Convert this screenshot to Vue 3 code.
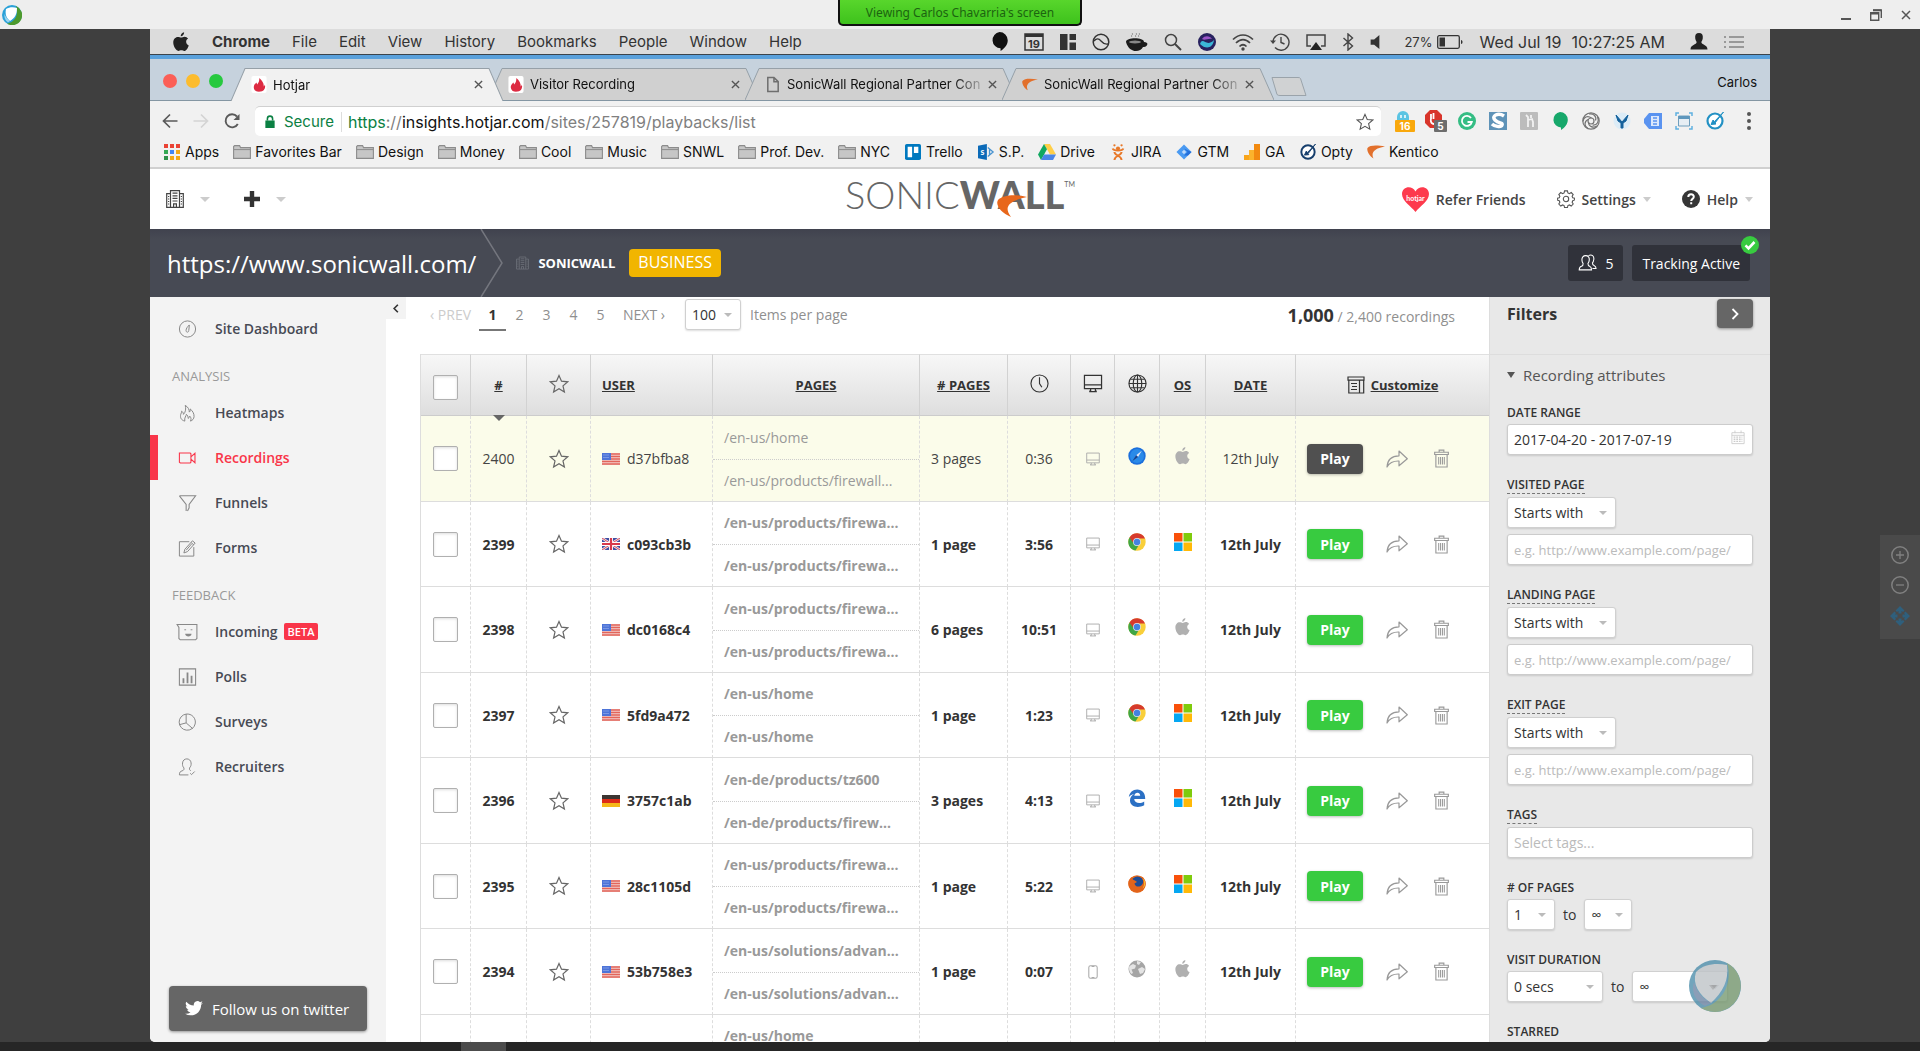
<script setup>
import { h } from 'vue'

const icons = {
  building: ['0 0 18 18', '<g fill="none" stroke="currentColor" stroke-width="1.2"><path d="M4.5 17.4V.7h9v16.7M4.5 3.6H.7v13.8h16.6V3.6h-3.8M7.6 17.4v-3.6h2.8v3.6"/><path d="M6.5 3.2h5M6.5 5.8h5M6.5 8.4h5M6.5 11h5M2 6.5h1.2M2 9h1.2M2 11.5h1.2M2 14h1.2M14.8 6.5H16M14.8 9H16M14.8 11.5H16M14.8 14H16"/></g>'],
  plus: ['0 0 16 16', '<path d="M5.8 0h4.4v5.8H16v4.4h-5.8V16H5.8v-5.8H0V5.8h5.8z" fill="currentColor"/>'],
  heart: ['0 0 27 25', '<path d="M13.5 25C9 19 0 14 0 7c0-7 9.500-9.500 13.500-2.500C17.500-2.500 27 0 27 7c0 7-9 12-13.500 18z" fill="#fd3a4d"/><text x="13.500" y="14" font-size="7" font-weight="700" font-family="Lato, sans-serif" text-anchor="middle" fill="#fff">hotjar</text>'],
  gear: ['0 0 20 20', '<path d="M8.400 1h3.200l.5 2.300 1.700.7 2-1.200 2.200 2.200-1.200 2 .7 1.700 2.100.5v1.800l-2.100.9-.7 1.700 1.200 2-2.200 2.200-2-1.200-1.700.7-.5 2.300H8.400l-.5-2.300-1.700-.7-2 1.200L2 15.600l1.200-2-.7-1.700-2.100-.7V9.200l2.100-.5.7-1.700L2 5l2.200-2.200 2 1.200 1.700-.7z" fill="none" stroke="currentColor" stroke-width="1.200"/><circle cx="10" cy="10" r="3" fill="none" stroke="currentColor" stroke-width="1.200"/>'],
  users: ['0 0 20 20', '<g fill="none" stroke="currentColor" stroke-width="1.200"><path d="M8 1.800c2.800 0 4.200 2 4 4.700-.1 2-1 3.300-1.500 4 0 1.800.2 2.500 1.800 3.100 1.500.6 2.200 1.500 2.200 4H.8c0-2.500.7-3.400 2.500-4 1.500-.6 2-1.300 1.800-3.100C4.500 9.800 3.900 8.500 3.800 6.500c-.1-2.700 1.400-4.700 4.200-4.700z"/><path d="M11 1.800c4-1.800 6.500.5 6 4.300-.2 1.700-.8 3-1.500 3.800 0 1.600.4 2.300 1.800 2.800 1.500.6 2.200 1.300 2.200 3.500h-4"/></g>'],
  star: ['0 0 20 20', '<path d="M10 1.500l2.500 5.700 6.200.6-4.700 4.100 1.400 6.100-5.400-3.200L4.600 18 6 11.900 1.300 7.800l6.200-.6z" fill="none" stroke="currentColor" stroke-width="1.200"/>'],
  clock: ['0 0 20 20', '<circle cx="10" cy="10" r="9" fill="none" stroke="currentColor" stroke-width="1.200"/><path d="M10 3.500V10l2.500 4" fill="none" stroke="currentColor" stroke-width="1.200"/>'],
  monitor: ['0 0 20 20', '<path d="M1 1.500h18v14H1zM1 11.500h18M7.500 15.500v2.500H6M12.500 15.500v2.500H14M6 18.500h8" fill="none" stroke="currentColor" stroke-width="1.300"/>'],
  phone: ['0 0 20 20', '<rect x="4" y="1" width="12" height="18" rx="2.500" fill="none" stroke="currentColor" stroke-width="1.500"/><path d="M8 1.500h4v1.500H8zM8 17h4v1.500H8z" fill="currentColor"/>'],
  globe: ['0 0 20 20', '<g fill="none" stroke="currentColor" stroke-width="1.200"><circle cx="10" cy="10" r="9"/><ellipse cx="10" cy="10" rx="4.500" ry="9"/><path d="M10 1v18M1 10h18M2.500 5.500h15M2.500 14.500h15"/></g>'],
  customize: ['0 0 18 18', '<path d="M1 1h16v3.200H1zM1.800 4.200V17h14.900V4.200M12.500 4.200V17M4 7.500h6M5 10.500h5M4 13.500h6" fill="none" stroke="currentColor" stroke-width="1.200"/>'],
  share: ['0 0 22 18', '<path d="M1 17C1.500 9 6 5.800 13 5.800V1l8.300 7.800-8.300 7V11C7 10.800 3.500 12.500 1 17z" fill="none" stroke="currentColor" stroke-width="1.200" stroke-linejoin="round"/>'],
  trash: ['0 0 16 20', '<path d="M5.500 3V1h5v2M.7 3.300h14.600v2.400H.7zM2 5.700V19h12V5.700" fill="none" stroke="currentColor" stroke-width="1.200"/><path d="M5 8.500v8M7 8.500v8M9 8.500v8M11 8.500v8" stroke="currentColor" stroke-width="1.100"/>'],
  gauge: ['0 0 20 20', '<g fill="none" stroke="currentColor" stroke-width="1.100"><circle cx="10" cy="10" r="9"/><path d="M12 5.500c-2 2-3.600 4-3.600 6.200 0 2.400 3 2.400 3 0C11.500 10 12 8 12 5.500z"/></g>'],
  flame: ['0 0 20 20', '<path d="M7 19c-4-1-5.500-4-4.500-7.500.5-1.500 1-2 1-3.500 1.500 1 2 2 2 3.500C8 9 8.500 5 7.500 1.500 11 3.500 12 6.500 12 9c1-.8 1.200-2 1-3.500 2.500 2 4.500 5 4.300 8.500-.2 2.500-1.800 4.300-4 5 1-2 .8-3.800-.8-5.500-.3 1.500-1 2-1.800 2.500.2-2-.7-3.500-2-4.500 0 2-2.500 3.500-1.700 7.500z" fill="none" stroke="currentColor" stroke-width="1.100"/>'],
  camera: ['0 0 20 20', '<path d="M1 4.500h12l.8.8v9.400l-.8.8H2l-1-.8zM13.800 8.800l4.500-4v10.500l-4.500-4" fill="none" stroke="currentColor" stroke-width="1.200"/>'],
  funnel: ['0 0 20 20', '<path d="M1 2h18l-7.200 9.500v3.800L10 19M1 2l7.500 9.500V19" fill="none" stroke="currentColor" stroke-width="1.200"/>'],
  form: ['0 0 20 20', '<path d="M12 3H1v16h16V9M6 15.500l1-4L15.500 2 18.500 4.500 10 14zM14 4l3 2.500M8.500 12.500l6-7" fill="none" stroke="currentColor" stroke-width="1.100"/>'],
  incoming: ['0 0 24 20', '<path d="M1 1.700h22v15.500l-1.500 1.500h-17L3 17.200V5z" fill="none" stroke="currentColor" stroke-width="1.200"/><path d="M9 7.500h2M16 7.500h2" stroke="currentColor"/><path d="M10 12h7c0 4-7 4-7 0z" fill="currentColor"/>'],
  poll: ['0 0 20 20', '<path d="M1 1h18v18H1z" fill="none" stroke="currentColor" stroke-width="1.200"/><path d="M5.500 11.500V17M10 5v12M14.500 8.500V17" stroke="currentColor" stroke-width="2"/>'],
  pie: ['0 0 20 20', '<path d="M8.500 1.200a9 9 0 1 0 10 11A9 9 0 0 0 8.500 1.200zM8.500 1.200V11L1 13M8.500 11l7.500 6.500" fill="none" stroke="currentColor" stroke-width="1.100"/>'],
  recruit: ['0 0 20 20', '<path d="M18 15l-3.500 3.500-1.500-1.500M11 18.800H1c0-3 1-4 3-4.500 2-.6 2.300-1.600 2-3.300C4.500 9.500 4.300 7.500 4.500 5.500c.5-6 9-6 9.500 0 .2 2-.2 4-1.700 5.500-.3 1.700 0 2.500 1.200 3" fill="none" stroke="currentColor" stroke-width="1.100"/>'],
  twitter: ['0 0 20 18', '<path d="M20 2.200c-.7.300-1.500.6-2.400.7A4 4 0 0 0 19.400.4c-.8.500-1.700.8-2.600 1A4.100 4.100 0 0 0 9.800 5C6.400 4.900 3.400 3.300 1.400.8a4 4 0 0 0 1.300 5.400c-.7 0-1.300-.2-1.900-.5 0 2 1.400 3.600 3.300 4-.6.200-1.200.2-1.800.1.500 1.600 2 2.800 3.800 2.800A8.200 8.200 0 0 1 0 14.300a11.600 11.600 0 0 0 6.300 1.800c7.500 0 11.900-6.300 11.700-11.800.8-.5 1.500-1.300 2-2.100z" fill="currentColor"/>'],
  calendar: ['0 0 16 16', '<path d="M1 2.500h14V15H1zM1 5.500h14M4.500 0v3M11.500 0v3" fill="none" stroke="currentColor"/><path d="M3 7.500h10M3 10h10M3 12.500h10" stroke="currentColor" stroke-width="1.500" stroke-dasharray="2 1"/>'],
  apple: ['0 0 18 22', '<path d="M12.500 0c.2 2.400-1.700 4.600-3.800 4.600C8.400 2.400 10.300.3 12.500 0zM9.300 6c.9 0 2-1 3.700-1 1.600 0 3.100.8 4 2.200-3.300 1.900-2.700 6.300.7 7.600-.9 2.900-2.900 6.200-4.900 6.200-1.300 0-1.900-.8-3.400-.8-1.500 0-2.200.8-3.400.8C3.300 21 .3 15.800.3 11.700.3 7.800 2.800 5.300 5.300 5.300c1.700 0 2.900.7 4 .7z" fill="currentColor"/>'],
  windows: ['0 0 18 18', '<path d="M0 0h8.500v8.500H0z" fill="#f9500a"/><path d="M9.500 0H18v8.500H9.500z" fill="#7fcb0c"/><path d="M0 9.500h8.500V18H0z" fill="#05a7f2"/><path d="M9.500 9.500H18V18H9.500z" fill="#ffb908"/>'],
  chrome: ['0 0 18 18', '<circle cx="9" cy="9" r="8.700" fill="#f9cf3a"/><path d="M9 9L1.500 4.600A8.700 8.700 0 0 0 7.500 17.600L11.500 11z" fill="#3fa646"/><path d="M1.500 4.600A8.700 8.700 0 0 1 17 5.500H9L5 9.500z" fill="#d63a2d"/><circle cx="9" cy="9" r="3.900" fill="#e4e6ee"/><circle cx="9" cy="9" r="3.200" fill="#4482e0"/>'],
  safari: ['0 0 18 18', '<circle cx="9" cy="9" r="8.700" fill="#1b6fdc"/><circle cx="9" cy="9" r="7" fill="#2a8ae8"/><path d="M13.800 3.800L10 10l-1.800-1.800z" fill="#e8e8f4"/><path d="M4.200 14.200L8.200 8.200 10 10z" fill="#1c3f86"/>'],
  edge: ['0 0 18 18', '<path d="M.8 8.200C1.500 3.500 4.800.5 9.200.5c5.200 0 8.200 3.800 8 9.500H6.200c.3 4.500 6 5.200 10 2.600v3.700C9.500 19.700 2 17.500 2 11.500c0-3 1.500-5 4-6.200C3.500 5.500 2 6.500.8 8.200zm5.500-1.400h5.900c.1-4-5.400-4-5.900 0z" fill="#2b70c4"/>'],
  firefox: ['0 0 18 18', '<circle cx="9" cy="9" r="8.700" fill="#e66a1c"/><circle cx="9.500" cy="7.500" r="6" fill="#1e4c94"/><path d="M.7 6C2 3 4 2 4 2c0 2 1 3 3 3.500L9 7 6.500 8.500C7 12 12 13 14.500 9c2-3-.5-7-2.500-8 4.500 1 6.500 6 5.200 10.500C15.500 17 9 19 4.500 16 1 13.500-.3 10 .7 6z" fill="#e2641b"/><path d="M14.500 3c2 3 2.500 7 0 10.500 3-2 4-7 0-10.500z" fill="#fbc42f"/>'],
  world: ['0 0 18 18', '<circle cx="9" cy="9" r="8.500" fill="#a5a5a5"/><path d="M1.500 6L5 4l3 1.500-1 3-3.500 1L5 13l-1.500 1C1 12 .5 8 1.500 6zM9 1l4 1-2 3-2-1zM10 9l4-2 3 2-2 4-3 1z" fill="#e4e4e4"/>'],
  us: ['0 0 18 12', '<path d="M0 0h18v12H0z" fill="#f3cfcb"/><path d="M0 1h18M0 3.500h18M0 6h18M0 8.500h18M0 11h18" stroke="#e2655b" stroke-width="1.300"/><path d="M0 0h9v7H0z" fill="#4d74d8"/><path d="M1.500 2h6M1.500 4.500h6" stroke="#a9bdf0" stroke-dasharray="1 1"/>'],
  gb: ['0 0 18 12', '<path d="M0 0h18v12H0z" fill="#3e4ea2"/><path d="M0 0l18 12M18 0L0 12" stroke="#f4e4ea" stroke-width="2.500"/><path d="M0 0l18 12M18 0L0 12" stroke="#d64d5c"/><path d="M9 0v12M0 6h18" stroke="#fff" stroke-width="4"/><path d="M9 0v12M0 6h18" stroke="#d8394c" stroke-width="2.200"/>'],
  de: ['0 0 18 12', '<path d="M0 0h18v4H0z" fill="#3c3532"/><path d="M0 4h18v4H0z" fill="#dd2b18"/><path d="M0 8h18v4H0z" fill="#f5b819"/>'],
  fire: ['0 0 16 18', '<rect width="16" height="18" rx="2" fill="#fff"/><path d="M4.500 16C1 12.500 2.500 9 5.500 7c0 1 .2 1.500.6 2C8 7 8.500 4.500 8.300 2c3.500 3 5 6 4.700 9 .8-.5 1-1 1.200-2 .8 3 0 5.500-2.500 7-1.500.8-5.200 1-7.200 0z" fill="#dd2b42"/>'],
  page: ['0 0 14 18', '<path d="M1.500 1.500h6.500l4.500 4.500v10.500h-11zM8 1.500V6h4.500" fill="none" stroke="#6e6e6e" stroke-width="1.600"/>'],
  swoosh: ['0 0 18 14', '<path d="M18 1.500C10 .2 3 0 .5 3-.5 5.500 2 11 6.500 13.500 4 8.500 6 3.500 18 1.500z" fill="#e2702c"/>'],
  folder: ['0 0 18 14', '<path d="M.6 1.600V13.400h16.800V2.600H7.500L6.600.6H1.600z" fill="#c6c6c6" stroke="#8c8c8c" stroke-width="1.100"/><path d="M1 4.600h16" stroke="#8c8c8c"/>'],
  apps: ['0 0 16 16', '<path d="M0 0h4v4H0zM6 0h4v4H6zM12 0h4v4h-4z" fill="#ea4335"/><path d="M0 6h4v4H0z" fill="#34a853"/><path d="M6 6h4v4H6z" fill="#4285f4"/><path d="M12 6h4v4h-4zM6 12h4v4H6zM12 12h4v4h-4z" fill="#f4a815"/><path d="M0 12h4v4H0z" fill="#2e8f48"/>'],
  trello: ['0 0 18 18', '<rect width="18" height="18" rx="2" fill="#0079bf"/><path d="M3 3h5v12H3zM10 3h5v7h-5z" fill="#fff"/>'],
  sharepoint: ['0 0 18 18', '<path d="M0 2l10-2v18L0 16z" fill="#0b6ab8"/><path d="M11 4l6 5-6 5M13 6v6" fill="none" stroke="#4a94d0" stroke-width="1.500"/><text x="5" y="12.500" font-size="10" font-weight="700" font-family="Lato, sans-serif" text-anchor="middle" fill="#fff">s</text>'],
  drive: ['0 0 18 16', '<path d="M6 0h6l6 10.500h-6z" fill="#ffcf48"/><path d="M6 0l3 5.200L3 16 0 10.500z" fill="#11a861"/><path d="M6 10.500h12L15 16H3z" fill="#4a86e8"/>'],
  jira: ['0 0 14 18', '<path d="M1 5c1 3 11 3 12 0M3 18c0-5 8-5 8-9M11 18c0-5-8-5-8-9" fill="none" stroke="#e8792a" stroke-width="2.200"/><circle cx="7" cy="5" r="2.300" fill="#e8792a"/><circle cx="3" cy="1.500" r="1.300" fill="#e8792a"/><circle cx="11" cy="1.500" r="1.300" fill="#e8792a"/>'],
  gtm: ['0 0 18 18', '<path d="M9 .5L17.500 9 9 17.500.5 9z" fill="#4a9af2"/><path d="M9 5l4 4-4 4 4.500 0L17.500 9z" fill="#246fdb"/><path d="M9 6.500L11.500 9 9 11.500 6.500 9z" fill="#bcd9fb"/>'],
  ga: ['0 0 16 16', '<path d="M0 11h5v5H0z" fill="#f9a51a"/><path d="M5 6h5v10H5z" fill="#fbb32c"/><path d="M10 0h6v16h-6z" fill="#f28a10"/>'],
  opty: ['0 0 18 18', '<circle cx="9" cy="9" r="7.500" fill="#fff" stroke="currentColor" stroke-width="2.200"/><path d="M17.500 0L8.500 9.500l-1.500-1.500-2 4.500 5-.5-1-1z" fill="currentColor" stroke="currentColor"/>'],
  lock: ['0 0 10 14', '<path d="M0 6h10v8H0z" fill="#0b8043"/><path d="M2.200 6V4a2.800 2.800 0 0 1 5.600 0v2" fill="none" stroke="#0b8043" stroke-width="1.700"/>'],
  back: ['0 0 16 16', '<path d="M15.500 8H1.500M8 1.500L1.500 8 8 14.500" fill="none" stroke="currentColor" stroke-width="1.700"/>'],
  forward: ['0 0 16 16', '<path d="M.5 8h14M8 1.500L14.500 8 8 14.500" fill="none" stroke="currentColor" stroke-width="1.700"/>'],
  reload: ['0 0 16 16', '<path d="M13.800 11a6.500 6.500 0 1 1-.8-7.500" fill="none" stroke="currentColor" stroke-width="1.900"/><path d="M15.500 1v6h-6z" fill="currentColor"/>'],
  close: ['0 0 10 10', '<path d="M1 1l8 8M9 1L1 9" stroke="currentColor" stroke-width="1.500"/>'],
  ghost: ['0 0 20 22', '<path d="M2 12V7a6 6 0 0 1 12 0v5z" fill="#5bc4e3"/><path d="M6 5v3M10 5v3" stroke="#fff" stroke-width="1.500"/><rect y="10" width="20" height="12" rx="1" fill="#f9a80c"/><text x="10" y="20" font-size="10" font-weight="700" font-family="Inter, sans-serif" text-anchor="middle" fill="#fff">16</text>'],
  block: ['0 0 22 22', '<path d="M5 0h7l5 5v8l-5 5H5l-5-5V5z" fill="#d8352b"/><path d="M6 9V4M8.500 9V3M6 9c-1 3 1 5 3 5" stroke="#fff" stroke-width="1.800" fill="none"/><rect x="9" y="10" width="13" height="12" rx="1" fill="#6d6d6d"/><text x="15.500" y="20" font-size="10" font-weight="700" font-family="Inter, sans-serif" text-anchor="middle" fill="#fff">5</text>'],
  grammar: ['0 0 18 18', '<circle cx="9" cy="9" r="9" fill="#35bd84"/><path d="M13 6A5 5 0 1 0 13.800 10H9.500" fill="none" stroke="#fff" stroke-width="1.800"/>'],
  stylus: ['0 0 18 18', '<rect width="18" height="18" fill="#5f93b8"/><path d="M15 4C9 0 2 4 6 8s8 2 7 5-8 1-10-1" fill="none" stroke="#fff" stroke-width="3.500"/>'],
  grayext: ['0 0 18 18', '<rect width="18" height="18" rx="1" fill="#bcbcbc"/><path d="M6 3l2 2v10M8 8l4-1 1 3v5M11 3v3" fill="none" stroke="#f2f2f2" stroke-width="1.800"/>'],
  hangouts: ['0 0 16 18', '<path d="M8 0a7.800 7.800 0 0 1 7.800 7.800C15.800 12 13 15.500 9 18v-2.500A7.800 7.800 0 0 1 8 0z" fill="currentColor"/>'],
  swirl: ['0 0 18 18', '<g fill="none" stroke="#747474" stroke-width="1.200"><circle cx="9" cy="9" r="8.200"/><circle cx="9" cy="9" r="3"/><path d="M7 2c4-1 8 2 6.500 6.500M15.500 5c2 4 0 8.500-5 8M15 14c-4 2.500-8.500.5-8.500-4M6 16.500C2 14.500 2 9.500 6 7.500M1 9.500C1.500 5 5.500 3 9.500 6"/></g>'],
  yext: ['0 0 18 18', '<circle cx="9" cy="9" r="8.500" fill="#dcecf7"/><path d="M3 3l6 7 6-7-2 6-3 2v5H8v-5L5 9z" fill="#14619c" stroke="#14619c"/>'],
  tag: ['0 0 18 16', '<path d="M5 0h13v16H5L0 10V6z" fill="#5a93f0"/><path d="M7 3h8v10H7z" fill="#dce8fc"/><path d="M9 5h4M9 8h4M9 11h4" stroke="#5a93f0" stroke-width="1.500"/>'],
  capture: ['0 0 18 18', '<path d="M1 4V1h3M14 1h3v3M17 14v3h-3M4 17H1v-3" fill="none" stroke="#5fb0e0" stroke-width="1.500"/><path d="M3.500 4h11v10h-11z" fill="#e6eef4" stroke="#6f9ebd"/><path d="M3.500 4h11v3h-11z" fill="#5f97bd"/>'],
  calday: ['0 0 20 18', '<path d="M1 1h18v16H1z" fill="none" stroke="#333" stroke-width="1.500"/><path d="M1 1h18v3H1z" fill="#333"/><text x="10" y="14.500" font-size="11" font-weight="700" font-family="Inter, sans-serif" text-anchor="middle" fill="#333">19</text>'],
  panes: ['0 0 16 16', '<path d="M0 0h7.500v16H0zM9.500 0H16v6H9.500zM9.500 8.500H16V16H9.500z" fill="#333"/>'],
  noentry: ['0 0 18 18', '<circle cx="9" cy="9" r="7.800" fill="none" stroke="#333" stroke-width="1.500"/><path d="M2 8c2.500-2.500 4.500-3 7 0s4 3.500 7 3" fill="none" stroke="#333" stroke-width="1.300"/>'],
  coffee: ['0 0 22 20', '<path d="M0 10c0-5 18-5 18 0 6 0 3 6-1 5-3 6-14 6-17-5z" fill="#1c1c1c"/><ellipse cx="9" cy="10" rx="6" ry="1.500" fill="#888"/><path d="M6 5c-2-2 2-2 0-4M10 5c-2-2 2-2 0-4M13 5c-2-2 2-2 0-4" fill="none" stroke="#888"/>'],
  search: ['0 0 18 18', '<circle cx="7" cy="7" r="5.500" fill="none" stroke="#444" stroke-width="1.500"/><path d="M11 11l6 6" stroke="#444" stroke-width="2"/>'],
  siri: ['0 0 18 18', '<circle cx="9" cy="9" r="9" fill="#28225f"/><path d="M2 11c3-8 6 4 14-4-1 8-8 10-14 4z" fill="#3bb7d8"/><path d="M4 6c3-4 8-3 10 0-4-1-7 2-10 0z" fill="#9b55c8"/>'],
  wifi: ['0 0 22 18', '<path d="M1 6.500c6-6 14-6 20 0M4 10c4.500-4.500 9.500-4.500 14 0M7.500 13.500c2.500-2.500 4.500-2.500 7 0" fill="none" stroke="#444" stroke-width="1.700"/><circle cx="11" cy="16" r="1.700" fill="#444"/>'],
  history: ['0 0 20 18', '<path d="M3 9a8 8 0 1 1 2 5.500M11 4v5.500l3.500 1.500" fill="none" stroke="#444" stroke-width="1.400"/><path d="M0 7.500h6L3 11z" fill="#444"/>'],
  airplay: ['0 0 20 16', '<path d="M5 12H1V1h18v11h-4" fill="none" stroke="#444" stroke-width="1.500"/><path d="M10 8l6 8H4z" fill="#222"/>'],
  bluetooth: ['0 0 12 18', '<path d="M1.500 5l9 8L6 17V1l4.500 4-9 8" fill="none" stroke="#444" stroke-width="1.400"/>'],
  volume: ['0 0 10 16', '<path d="M0 5h4l6-5v16l-6-5H0z" fill="#333"/>'],
  battery: ['0 0 26 14', '<rect x=".7" y=".7" width="21.600" height="12.600" rx="1.500" fill="none" stroke="#333" stroke-width="1.300"/><path d="M2.500 2.500H8v9H2.500z" fill="#333"/><path d="M24 5c2 0 2 4 0 4z" fill="#333"/>'],
  person: ['0 0 18 18', '<path d="M9 0c3 0 4.500 2 4 5.500-.3 2-1 3-1.500 4 0 3 6.500 2.500 6.500 8H0c0-5.500 6.500-5 6.500-8-.5-1-1.200-2-1.500-4C4.500 2 6 0 9 0z" fill="#222"/>'],
  list: ['0 0 20 12', '<path d="M0 1h2M5 1h15M0 6h2M5 6h15M0 11h2M5 11h15" stroke="#999" stroke-width="2"/>'],
  ball: ['0 0 20 20', '<circle cx="10" cy="10" r="10" fill="#2aa1d8"/><path d="M14 .9A10 10 0 1 1 5 18.700C13 17 17 10 14 .9z" fill="#4d9a2d"/><path d="M4 4c3-2 8-2 11-1 0 6-2 10-7 13C4 13 3 9 4 4z" fill="#fff"/><path d="M2.500 9c1 3 3 5 5.500 7l-2 1.500C3 15.500 2 12 2.500 9z" fill="#9ad4f0"/>'],
  zoomin: ['0 0 18 18', '<circle cx="9" cy="9" r="8.200" fill="none" stroke="currentColor" stroke-width="1.500"/><path d="M9 5v8M5 9h8" stroke="currentColor" stroke-width="1.300"/>'],
  zoomout: ['0 0 18 18', '<circle cx="9" cy="9" r="8.200" fill="none" stroke="currentColor" stroke-width="1.500"/><path d="M5 9h8" stroke="currentColor" stroke-width="1.300"/>'],
  move: ['0 0 20 20', '<path d="M10 0l4.500 4.500-1.500 1.500-1.500-1v2.500h-3V5L7 6 5.500 4.500zM10 20l4.500-4.500L13 14l-1.500 1v-2.500h-3V15L7 14l-1.500 1.500zM0 10l4.500-4.500L6 7 5 8.500h2.500v3H5L6 13l-1.500 1.500zM20 10l-4.500-4.500L14 7l1 1.500h-2.500v3H15L14 13l1.500 1.500z" fill="currentColor"/>'],
  arrowr: ['0 0 8 12', '<path d="M1.500 1l5 5-5 5" fill="none" stroke="currentColor" stroke-width="1.800"/>'],
  arrowl: ['0 0 8 12', '<path d="M6.500 1l-5 5 5 5" fill="none" stroke="currentColor" stroke-width="2.200"/>'],
  question: ['0 0 18 18', '<circle cx="9" cy="9" r="9" fill="#363636"/><path d="M6.300 7c0-3.500 5.500-3.500 5.500-.3C11.800 9 9.200 8.700 9.200 11M9.200 12.300v2" fill="none" stroke="#fff" stroke-width="2"/>'],
  check: ['0 0 18 18', '<circle cx="9" cy="9" r="9" fill="#38cb40"/><path d="M4.500 9.300l3 3 6-6.300" fill="none" stroke="#fff" stroke-width="2.600"/>'],
  minimize: ['0 0 10 12', '<path d="M0 10h10" stroke="currentColor" stroke-width="2"/>'],
  restore: ['0 0 12 12', '<path d="M.7 3.700h8v7.600h-8zM3 1h8.300v8" fill="none" stroke="currentColor" stroke-width="1.400"/><path d="M.7 4.500h8M3 1.300h8" stroke="currentColor" stroke-width="1.800"/>'],
}

const Icon = (props) =>
  h('svg', {
    viewBox: icons[props.name][0],
    width: props.w,
    height: props.h || props.w,
    innerHTML: icons[props.name][1],
    'aria-hidden': 'true',
    style: { color: props.color },
  })
Icon.props = ['name', 'w', 'h', 'color']

const menus = ['Chrome', 'File', 'Edit', 'View', 'History', 'Bookmarks', 'People', 'Window', 'Help']

const tabs = [
  { icon: 'fire', title: 'Hotjar' },
  { icon: 'fire', title: 'Visitor Recording' },
  { icon: 'page', title: 'SonicWall Regional Partner Con' },
  { icon: 'swoosh', title: 'SonicWall Regional Partner Con' },
]

const extensions = [
  ['ghost', 20, 22], ['block', 22, 22], ['grammar', 18, 18], ['stylus', 18, 18], ['grayext', 18, 18],
  ['hangouts', 16, 18, '#17a86b'], ['swirl', 18, 18], ['yext', 18, 18], ['tag', 18, 16], ['capture', 18, 18], ['opty', 18, 18, '#2391c4'],
]

const bookmarks = [
  ['apps', 'Apps'], ['folder', 'Favorites Bar'], ['folder', 'Design'], ['folder', 'Money'], ['folder', 'Cool'],
  ['folder', 'Music'], ['folder', 'SNWL'], ['folder', 'Prof. Dev.'], ['folder', 'NYC'], ['trello', 'Trello'],
  ['sharepoint', 'S.P.'], ['drive', 'Drive'], ['jira', 'JIRA'], ['gtm', 'GTM'], ['ga', 'GA'], ['opty', 'Opty'], ['swoosh', 'Kentico'],
]

const nav = [
  { items: [['gauge', 'Site Dashboard']] },
  { label: 'Analysis', items: [['flame', 'Heatmaps'], ['camera', 'Recordings'], ['funnel', 'Funnels'], ['form', 'Forms']] },
  { label: 'Feedback', items: [['incoming', 'Incoming'], ['poll', 'Polls'], ['pie', 'Surveys'], ['recruit', 'Recruiters']] },
]

const fw = '/en-us/products/firewa...'
const rows = [
  { n: 2400, flag: 'us', user: 'd37bfba8', pages: ['/en-us/home', '/en-us/products/firewall...'], count: '3 pages', time: '0:36', device: 'monitor', browser: 'safari', os: 'apple', seen: true },
  { n: 2399, flag: 'gb', user: 'c093cb3b', pages: [fw, fw], count: '1 page', time: '3:56', device: 'monitor', browser: 'chrome', os: 'windows' },
  { n: 2398, flag: 'us', user: 'dc0168c4', pages: [fw, fw], count: '6 pages', time: '10:51', device: 'monitor', browser: 'chrome', os: 'apple' },
  { n: 2397, flag: 'us', user: '5fd9a472', pages: ['/en-us/home', '/en-us/home'], count: '1 page', time: '1:23', device: 'monitor', browser: 'chrome', os: 'windows' },
  { n: 2396, flag: 'de', user: '3757c1ab', pages: ['/en-de/products/tz600', '/en-de/products/firew...'], count: '3 pages', time: '4:13', device: 'monitor', browser: 'edge', os: 'windows' },
  { n: 2395, flag: 'us', user: '28c1105d', pages: [fw, fw], count: '1 page', time: '5:22', device: 'monitor', browser: 'firefox', os: 'windows' },
  { n: 2394, flag: 'us', user: '53b758e3', pages: ['/en-us/solutions/advan...', '/en-us/solutions/advan...'], count: '1 page', time: '0:07', device: 'phone', browser: 'world', os: 'apple' },
]

const urlFilters = ['Visited page', 'Landing page', 'Exit page']
</script>

<template>
  <div class="viewer">
    <header class="titlebar">
      <Icon name="ball" w="20" class="ball" />
      <div class="notice">Viewing Carlos Chavarria's screen</div>
      <div class="winbtns">
        <button aria-label="Minimize"><Icon name="minimize" w="10" h="12" /></button>
        <button aria-label="Restore"><Icon name="restore" w="12" /></button>
        <button aria-label="Close"><Icon name="close" w="10" /></button>
      </div>
    </header>

    <div class="stage">
      <div class="screen">
        <div class="menubar">
          <Icon name="apple" w="16" h="20" color="#222" class="logo" />
          <span v-for="m in menus" :key="m" class="menu">{{ m }}</span>
          <div class="tray">
            <Icon name="hangouts" w="17" h="19" color="#111" />
            <Icon name="calday" w="20" h="18" />
            <Icon name="panes" w="16" />
            <Icon name="noentry" w="18" />
            <Icon name="coffee" w="22" h="20" />
            <Icon name="search" w="18" />
            <Icon name="siri" w="18" />
            <Icon name="wifi" w="22" h="18" />
            <Icon name="history" w="20" h="18" />
            <Icon name="airplay" w="20" h="16" />
            <Icon name="bluetooth" w="12" h="18" />
            <Icon name="volume" w="10" h="14" />
            <span class="power"><small>27%</small><Icon name="battery" w="26" h="14" /></span>
            <span class="clock"><span>Wed Jul 19</span><span>10:27:25 AM</span></span>
            <Icon name="person" w="18" h="17" />
            <Icon name="list" w="20" h="12" />
          </div>
        </div>

        <div class="tabstrip">
          <div class="lights"><i></i><i></i><i></i></div>
          <div v-for="(t, i) in tabs" :key="i" class="tab" :class="{ active: i === 0 }">
            <svg class="shape" viewBox="0 0 272 32" preserveAspectRatio="none"><path d="M0 32L14 .5H258L272 32" /></svg>
            <Icon :name="t.icon" w="16" h="17" class="fav" />
            <span class="title">{{ t.title }}</span>
            <button class="x" aria-label="Close tab"><Icon name="close" w="9" /></button>
          </div>
          <svg class="newtab" width="36" height="19" viewBox="0 0 36 19"><path d="M1 .5h26q2 0 2.500 1L35 18.500H9q-2 0-3-1z" fill="#d0d2d3" stroke="#9aa3aa" /></svg>
          <span class="profile">Carlos</span>
        </div>

        <div class="toolbar">
          <button class="tb" aria-label="Back"><Icon name="back" w="16" color="#5a5a5a" /></button>
          <button class="tb" aria-label="Forward"><Icon name="forward" w="16" color="#d4d4d4" /></button>
          <button class="tb" aria-label="Reload"><Icon name="reload" w="16" color="#5a5a5a" /></button>
          <div class="omnibox">
            <Icon name="lock" w="10" h="13" />
            <span class="secure">Secure</span>
            <span class="url"><b>https</b>://<em>insights.hotjar.com</em>/sites/257819/playbacks/list</span>
            <Icon name="star" w="18" color="#555" />
          </div>
          <div class="exts">
            <span v-for="e in extensions" :key="e[0]"><Icon :name="e[0]" :w="e[1]" :h="e[2]" :color="e[3]" /></span>
          </div>
          <div class="dots"><i></i><i></i><i></i></div>
        </div>

        <nav class="bookmarks" aria-label="Bookmarks">
          <a v-for="b in bookmarks" :key="b[1]" href="#"><Icon :name="b[0]" w="18" h="16" color="#173f6d" />{{ b[1] }}</a>
        </nav>

        <div class="apphead">
          <button class="drop" aria-label="Organization"><Icon name="building" w="18" color="#444" /></button>
          <button class="drop" aria-label="Add"><Icon name="plus" w="16" color="#333" /></button>
          <div class="brand">
            <span class="thin">SONIC</span><span class="heavy">WALL</span><small>TM</small>
            <svg class="swoosh" width="30" height="22" viewBox="0 0 30 22"><path d="M30 2C18-1 6 0 1 5c-3 5 3 13 13 17-7-9-4-16 16-20z" fill="#e8671b" /></svg>
          </div>
          <div class="links">
            <a href="#"><Icon name="heart" w="27" h="25" />Refer Friends</a>
            <a href="#" class="more"><Icon name="gear" w="18" color="#555" />Settings</a>
            <a href="#" class="more"><Icon name="question" w="18" />Help</a>
          </div>
        </div>

        <div class="sitebar">
          <h1>https://www.sonicwall.com/</h1>
          <svg class="chev" width="24" height="68" viewBox="0 0 24 68"><path d="M1 0l21 34L1 68" fill="none" stroke="#74767e" stroke-width="1.500" /></svg>
          <Icon name="building" w="13" h="14" color="#6b6e77" />
          <strong>SONICWALL</strong>
          <span class="plan">BUSINESS</span>
          <button class="dark people"><Icon name="users" w="19" h="18" />5</button>
          <button class="dark">Tracking Active<Icon name="check" w="18" class="ok" /></button>
        </div>

        <div class="body">
          <aside class="side">
            <section v-for="(g, gi) in nav" :key="gi">
              <h2 v-if="g.label">{{ g.label }}</h2>
              <a v-for="i in g.items" :key="i[1]" href="#" :class="{ on: i[1] === 'Recordings' }">
                <span class="ic"><Icon :name="i[0]" :w="i[0] === 'incoming' ? 24 : 19" h="18" /></span>{{ i[1] }}
                <span v-if="i[1] === 'Incoming'" class="beta">BETA</span>
              </a>
            </section>
            <button class="tweet"><Icon name="twitter" w="18" h="16" />Follow us on twitter</button>
          </aside>

          <main class="main">
            <button class="collapse" aria-label="Collapse menu"><Icon name="arrowl" w="6" h="9" color="#333" /></button>
            <div class="pager">
              <span class="prev">‹ PREV</span>
              <a v-for="p in 5" :key="p" href="#" class="num" :class="{ cur: p === 1 }">{{ p }}</a>
              <a href="#" class="next">NEXT ›</a>
              <span class="sel per"><select id="per"><option>100</option></select></span>
              <label for="per">Items per page</label>
              <p><b>1,000</b> / 2,400 recordings</p>
            </div>

            <table>
              <colgroup>
                <col class="c-check" /><col class="c-n" /><col class="c-star" /><col class="c-user" /><col /><col class="c-count" />
                <col class="c-time" /><col class="c-dev" /><col class="c-br" /><col class="c-os" /><col class="c-date" /><col class="c-act" />
              </colgroup>
              <thead>
                <tr>
                  <th class="pick"><input type="checkbox" aria-label="Select all" /></th>
                  <th class="sorted"><u>#</u></th>
                  <th><Icon name="star" w="20" color="#666" /></th>
                  <th class="l"><u>USER</u></th>
                  <th><u>PAGES</u></th>
                  <th><u># PAGES</u></th>
                  <th><Icon name="clock" w="19" /></th>
                  <th><Icon name="monitor" w="20" h="19" /></th>
                  <th><Icon name="globe" w="19" /></th>
                  <th><u>OS</u></th>
                  <th><u>DATE</u></th>
                  <th><span class="cust"><Icon name="customize" w="18" /><u>Customize</u></span></th>
                </tr>
              </thead>
              <tbody>
                <tr v-for="r in rows" :key="r.n" :class="{ seen: r.seen }">
                  <td><input type="checkbox" :aria-label="'Select ' + r.n" /></td>
                  <td>{{ r.n }}</td>
                  <td><Icon name="star" w="20" color="#666" /></td>
                  <td class="l"><span class="who"><Icon :name="r.flag" w="18" h="12" />{{ r.user }}</span></td>
                  <td class="pages"><div v-for="(p, i) in r.pages" :key="i">{{ p }}</div></td>
                  <td class="l">{{ r.count }}</td>
                  <td>{{ r.time }}</td>
                  <td><Icon :name="r.device" w="14" color="#aaa" /></td>
                  <td class="up"><Icon :name="r.browser" w="18" /></td>
                  <td class="up"><Icon :name="r.os" :w="r.os === 'apple' ? 15 : 18" h="18" color="#b0b0b0" /></td>
                  <td>12th July</td>
                  <td>
                    <div class="acts">
                      <button class="play">Play</button>
                      <button class="ghost" aria-label="Share"><Icon name="share" w="22" h="18" /></button>
                      <button class="ghost" aria-label="Delete"><Icon name="trash" w="15" h="19" /></button>
                    </div>
                  </td>
                </tr>
                <tr>
                  <td></td><td></td><td></td><td></td>
                  <td class="pages"><div>/en-us/home</div><div></div></td>
                  <td></td><td></td><td></td><td></td><td></td><td></td><td></td>
                </tr>
              </tbody>
            </table>
          </main>

          <aside class="filters">
            <div class="fhead">
              <h2>Filters</h2>
              <button aria-label="Hide filters"><Icon name="arrowr" w="8" h="12" /></button>
            </div>
            <h3>Recording attributes</h3>
            <div class="field">
              <label for="range">Date range</label>
              <span class="date"><input id="range" type="text" value="2017-04-20 - 2017-07-19" /><Icon name="calendar" w="14" h="15" color="#ccc" /></span>
            </div>
            <div v-for="(f, i) in urlFilters" :key="f" class="field">
              <label class="dash" :for="'f' + i">{{ f }}</label>
              <span class="sel match"><select :aria-label="f + ' match'"><option>Starts with</option></select></span>
              <input :id="'f' + i" class="address" type="text" placeholder="e.g. http://www.example.com/page/" />
            </div>
            <div class="field">
              <label class="dash" for="tags">Tags</label>
              <input id="tags" type="text" placeholder="Select tags..." />
            </div>
            <div class="field">
              <label for="pmin"># of pages</label>
              <div class="rng">
                <span class="sel s"><select id="pmin"><option>1</option></select></span>to
                <span class="sel s"><select aria-label="Maximum pages"><option>∞</option></select></span>
              </div>
            </div>
            <div class="field">
              <label for="dmin">Visit duration</label>
              <div class="rng">
                <span class="sel m"><select id="dmin"><option>0 secs</option></select></span>to
                <span class="sel m"><select aria-label="Maximum duration"><option>∞</option></select></span>
              </div>
            </div>
            <h4>Starred</h4>
          </aside>
        </div>
        <svg class="watermark" width="52" height="52" viewBox="0 0 52 52">
          <circle cx="26" cy="26" r="26" fill="#4f8fac" />
          <path d="M38 3A26 26 0 1 1 12 48C34 44 44 22 38 3z" fill="#789a72" />
          <path d="M7 12c8-8 20-9 31-7 2 15-4 27-16 38C10 35 3 24 7 12z" fill="#bfc4c8" />
          <path d="M5 22c2 9 9 17 17 21l-6 3C6 41 2 32 5 22z" fill="#6f87a6" />
          <path d="M20 25h8l-4 5z" fill="#9fa2a4" />
        </svg>
      </div>

      <div class="zoombar">
        <button aria-label="Zoom in"><Icon name="zoomin" w="18" color="#808080" /></button>
        <button aria-label="Zoom out"><Icon name="zoomout" w="18" color="#808080" /></button>
        <button aria-label="Pan"><Icon name="move" w="20" color="#2f5f7c" /></button>
      </div>
    </div>
    <footer class="taskbar"><i></i></footer>
  </div>
</template>

<style>
body { margin: 0; background: #3f3f3f; }
</style>

<style scoped>
* { box-sizing: border-box; }
.viewer { display: flex; flex-direction: column; height: 100vh; overflow: hidden; background: #3f3f3f; font-family: "Open Sans", sans-serif; font-size: 14px; color: #333; }
svg { display: block; flex: none; }
button { border: 0; background: none; padding: 0; font: inherit; color: inherit; }
a { color: inherit; text-decoration: none; }
h1, h2, h3, h4, p { margin: 0; }

.titlebar { position: relative; display: flex; align-items: center; justify-content: space-between; height: 29px; padding: 0 9px 0 2px; background: #eee; flex: none; }
.notice { position: absolute; left: 50%; top: 0; width: 244px; height: 26px; margin-left: -122px; border: 2px solid #111; border-top: 0; border-radius: 0 0 5px 5px; background: linear-gradient(#58d62c, #3ec21c); color: #1c6410; font: 12px/25px "Noto Sans", sans-serif; text-align: center; }
.winbtns { display: flex; gap: 19px; color: #555; }

.stage { position: relative; flex: 1; min-height: 0; display: flex; padding: 0 150px; }
.screen { position: relative; flex: 1; min-width: 0; display: flex; flex-direction: column; overflow: hidden; background: #fff; border-radius: 0 0 5px 5px; }
.zoombar { position: absolute; right: 0; top: 506px; width: 40px; height: 104px; padding: 11px; display: flex; flex-direction: column; align-items: center; gap: 12px; background: #4a4a4a; }
.taskbar { height: 9px; background: #262626; flex: none; display: flex; padding-left: 461px; }
.taskbar i { width: 45px; background: #4c4c4c; }

.menubar { display: flex; align-items: center; height: 26px; padding: 0 26px 0 23px; background: #dcdcdc; border-bottom: 1px solid #3c444b; font: 15px/24px Inter, sans-serif; color: #333; flex: none; }
.menubar .logo { margin-right: 23px; }
.menu { margin-right: 22px; }
.menu:nth-of-type(1) { font-weight: 700; }
.tray { margin-left: auto; display: flex; align-items: center; gap: 16px; }
.power { display: flex; align-items: center; gap: 5px; margin-left: 8px; }
.power small { font-size: 13px; }
.clock { display: flex; gap: 10px; margin: 0 9px 0 0; font-size: 16px; }

.tabstrip { display: flex; align-items: flex-end; height: 46px; border-top: 4px solid #5aa1dc; background: #c6d2dd; border-bottom: 1px solid #8496a3; flex: none; font: 13px/20px Inter, sans-serif; color: #111; }
.lights { display: flex; gap: 9px; width: 96px; padding: 0 0 12px 13px; }
.lights i { width: 14px; height: 14px; border-radius: 50%; background: #fb5f57; }
.lights i:nth-child(2) { background: #fcbc2e; }
.lights i:nth-child(3) { background: #27c93f; }
.tab { position: relative; display: flex; align-items: center; width: 272px; height: 32px; margin-left: -15px; padding: 0 20px; flex: 0 1 272px; min-width: 0; }
.shape { position: absolute; inset: 0; width: 100%; height: 100%; }
.shape path { fill: #d0d0d0; stroke: #96a0a8; }
.tab.active { z-index: 2; height: 33px; margin-bottom: -1px; }
.tab.active .shape path { fill: #f1f1f1; }
.fav, .title, .x { position: relative; }
.title { flex: 1; min-width: 0; margin: 0 0 0 6px; overflow: hidden; white-space: nowrap; mask-image: linear-gradient(90deg, #000 83%, #0002 98%); }
.x { color: #555; }
.newtab { margin: 0 0 4px -3px; }
.profile { margin-left: auto; padding: 0 13px 8px 0; }

.toolbar { display: flex; align-items: center; height: 40px; padding: 0 19px 0 12px; background: #f1f1f1; flex: none; }
.tb { width: 16px; margin-right: 15px; }
.omnibox { flex: 1; display: flex; align-items: center; height: 30px; padding: 0 7px 0 10px; border-radius: 5px; background: #fff; border-top: 1px solid #d0d0d0; font: 15px/20px Inter, sans-serif; color: #808080; }
.secure { margin: 0 6px 0 9px; padding-right: 7px; border-right: 1px solid #ddd; color: #0b8043; }
.url { flex: 1; font-size: 16px; }
.url b { font-weight: 400; color: #0b8043; }
.url em { font-style: normal; color: #111; }
.exts { display: flex; margin-left: 8px; }
.exts span { display: grid; place-items: center; width: 31px; }
.dots { display: grid; gap: 3px; margin-left: 17px; }
.dots i { width: 4px; height: 4px; border-radius: 50%; background: #555; }

.bookmarks { display: flex; align-items: center; height: 28px; padding: 0 13px 4px; gap: 14px; background: #f1f1f1; border-bottom: 2px solid #d0d0d0; flex: none; font: 14px/20px Inter, sans-serif; color: #111; }
.bookmarks a { display: flex; align-items: center; gap: 4px; white-space: nowrap; }

.apphead { position: relative; display: flex; align-items: center; height: 60px; padding: 0 17px 0 16px; background: #fff; flex: none; }
.drop { display: flex; align-items: center; margin-right: 34px; }
.drop::after, .more::after { content: ""; margin-left: 16px; border: 5px solid transparent; border-top-color: #ccc; border-bottom: 0; }
.brand { position: absolute; left: 50%; top: 0; width: 240px; margin-left: -115px; display: flex; font: 38px/50px Lato, sans-serif; color: #666; }
.brand .thin { font-weight: 300; }
.brand .heavy { font-weight: 900; }
.brand small { font-size: 7px; line-height: 30px; }
.brand .swoosh { position: absolute; left: 152px; top: 26px; }
.links { margin-left: auto; display: flex; align-items: center; gap: 31px; font-weight: 600; color: #444; }
.links a { display: flex; align-items: center; gap: 7px; }
.more::after { margin-left: 0; border-left-width: 4px; border-right-width: 4px; }

.sitebar { display: flex; align-items: center; height: 68px; padding: 0 20px 0 17px; background: linear-gradient(#40424e, #474a54 10px); color: #fff; flex: none; }
.sitebar h1 { font-size: 24px; font-weight: 400; }
.chev { margin: 0 12px 0 4px; }
.sitebar strong { margin: 0 14px 0 9px; font-size: 13px; }
.plan { padding: 0 9px; height: 28px; border-radius: 4px; background: #f1b500; font-size: 16px; line-height: 27px; }
.dark { position: relative; display: flex; align-items: center; gap: 8px; height: 36px; margin-left: 9px; padding: 0 10px; border-radius: 3px; background: #30323a; font-weight: 500; }
.people { margin-left: auto; }
.ok { position: absolute; right: -9px; top: -9px; }

.body { display: flex; flex: 1; min-height: 0; }
.side { width: 236px; padding-top: 9px; background: #f3f3f3; flex: none; display: flex; flex-direction: column; color: #474a54; }
.side h2 { height: 39px; padding: 12px 0 0 22px; font-size: 13px; line-height: 27px; font-weight: 400; color: #999; text-transform: uppercase; }
.side a { display: flex; align-items: center; height: 45px; font-weight: 600; }
.side a.on { color: #f93549; border-left: 8px solid #f93549; }
.ic { display: grid; place-items: center; width: 24px; margin: 0 16px 0 25px; color: #888; }
.on .ic { margin-left: 17px; color: #f93549; }
.beta { margin-left: 6px; padding: 0 4px; border-radius: 2px; background: #f93549; color: #fff; font-size: 11px; line-height: 17px; }
.tweet { display: flex; align-items: center; gap: 9px; height: 45px; margin: auto 19px 11px; padding: 0 16px; border-radius: 4px; background: #666; color: #fff; font-size: 15px; box-shadow: 0 1px 3px #0006; white-space: nowrap; }

.main { position: relative; flex: 1; min-width: 0; padding-left: 34px; overflow: hidden; }
.collapse { position: absolute; left: 0; top: 0; display: flex; align-items: center; width: 20px; height: 22px; padding-left: 7px; background: #f3f3f3; }
.pager { display: flex; align-items: center; height: 57px; padding: 2px 34px 24px 10px; color: #8f8f8f; }
.prev { margin-right: 8px; color: #ccc; }
.num { width: 27px; line-height: 31px; text-align: center; }
.num.cur { height: 32px; border-bottom: 2px solid #777; color: #333; font-weight: 700; }
.next { margin: 0 20px 0 9px; }
.pager label { margin-left: 9px; }
.pager p { margin-left: auto; }
.pager b { font-size: 18px; color: #333; }

.sel { position: relative; display: inline-block; flex: none; }
.sel select { display: block; appearance: none; width: 100%; height: 31px; padding: 0 6px; border: 1px solid #d0d0d0; border-radius: 3px; background: #fff; font: inherit; color: #333; box-shadow: 0 1px 2px #0002; }
.sel::after { content: ""; position: absolute; right: 9px; top: 14px; border: 4px solid transparent; border-top-color: #bbb; border-bottom: 0; }
.per { width: 56px; }

table { width: 100%; table-layout: fixed; border-collapse: separate; border-spacing: 0; border-left: 1px solid #ddd; }
.c-check { width: 50px; } .c-n { width: 56px; } .c-star { width: 64px; } .c-user { width: 122px; } .c-count { width: 88px; } .c-time { width: 63px; }
.c-dev { width: 44px; } .c-br { width: 45px; } .c-os { width: 46px; } .c-date { width: 90px; } .c-act { width: 193px; }
th, td { padding: 0; text-align: center; }
th { position: relative; height: 62px; background: linear-gradient(#f7f7f7, #dedede); border-top: 1px solid #e0e0e0; border-bottom: 1px solid #ccc; border-right: 1px solid #d2d2d2; font-size: 13px; font-weight: 700; color: #333; }
th > svg, td > svg { margin: 0 auto; }
th > svg { margin-bottom: 3px; }
th.pick { padding-top: 5px; }
th:last-child, td:last-child { border-right: 0; }
.sorted::after { content: ""; position: absolute; left: 50%; top: 60px; margin-left: -6px; border: 6px solid transparent; border-top-color: #666; border-bottom: 0; z-index: 1; }
.cust { display: flex; justify-content: center; align-items: center; gap: 6px; }
td { height: 86px; border-bottom: 1px solid #ddd; border-right: 1px dashed #ddd; font-weight: 700; }
tr:nth-child(even) td { height: 85px; }
th.l, td.l { text-align: left; padding-left: 11px; }
.seen td { background: #fbfcea; font-weight: 400; color: #444; }
td.up { padding-bottom: 5px; }
.who { display: flex; align-items: center; gap: 7px; }
td.pages { text-align: left; color: #999; }
.pages div { height: 42px; padding-left: 11px; line-height: 41px; white-space: nowrap; }
.pages div + div { border-top: 1px dotted #ccc; }
input[type="checkbox"] { appearance: none; display: block; width: 25px; height: 25px; margin: 0 auto; border: 1px solid #b0b0b0; border-radius: 2px; background: #fff; box-shadow: inset 0 1px 3px #0002; }
.acts { display: flex; align-items: center; padding-left: 11px; }
.play { width: 56px; height: 30px; margin-right: 23px; border-radius: 4px; background: #38cb40; color: #fff; font-weight: 700; box-shadow: 0 1px 3px #0004; }
.seen .play { background: #505050; }
.ghost { margin-right: 26px; color: #999; }

.filters { width: 281px; padding-left: 17px; background: #e8e8e8; border-left: 1px solid #ddd; flex: none; overflow: hidden; }
.fhead { display: flex; justify-content: space-between; height: 58px; margin-left: -17px; padding: 2px 17px 0; border-bottom: 1px solid #ddd; }
.fhead h2 { font-size: 16px; line-height: 30px; }
.fhead button { display: grid; place-items: center; width: 36px; height: 29px; border-radius: 4px; background: #666; color: #fff; box-shadow: 0 1px 3px #0006; }
h3 { display: flex; align-items: center; gap: 8px; height: 40px; margin-bottom: 10px; font-size: 15px; font-weight: 400; color: #555; }
h3::before { content: ""; border: 4px solid transparent; border-top: 6px solid #555; border-bottom: 0; }
.field { width: 246px; margin-bottom: 22px; }
.field label, h4 { display: block; width: max-content; margin-bottom: 3px; font-size: 12px; line-height: 16px; font-weight: 600; text-transform: uppercase; color: #333; }
.field label.dash { border-bottom: 1px dashed #777; }
.field input { display: block; width: 100%; height: 31px; padding: 0 6px; border: 1px solid #ccc; border-radius: 3px; background: #fff; font: inherit; color: #333; box-shadow: 0 1px 2px #0002; }
.field input.address { font-size: 13px; }
.field input::placeholder { color: #bbb; }
.date { position: relative; display: block; }
.date svg { position: absolute; right: 8px; top: 6px; }
.match { width: 109px; margin-bottom: 6px; vertical-align: top; }
.rng { display: flex; align-items: center; gap: 8px; }
.s { width: 48px; }
.m { width: 96px; }
.watermark { position: absolute; right: 29px; bottom: 30px; opacity: .8; }
</style>
